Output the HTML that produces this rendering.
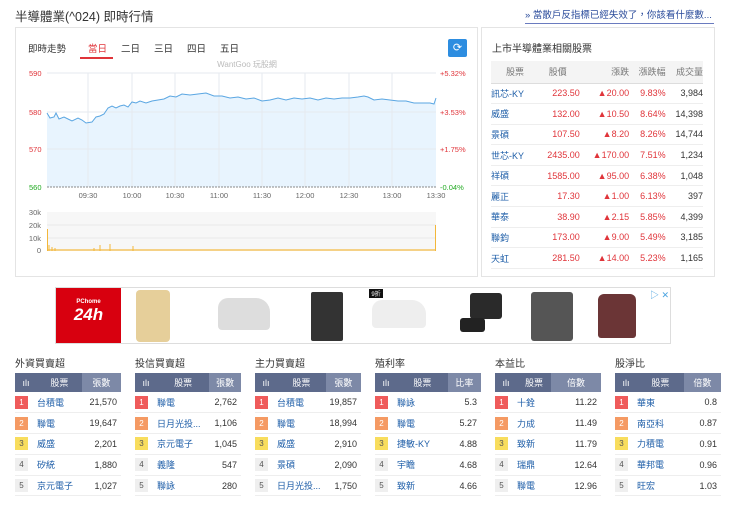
<!DOCTYPE html><html><head><meta charset="utf-8"><style>
*{margin:0;padding:0;box-sizing:border-box}
body{width:740px;height:506px;background:#fff;font-family:"Liberation Sans","Noto Sans CJK TC",sans-serif;color:#333;position:relative;overflow:hidden;font-size:9px}
.a{position:absolute}
.title{left:15px;top:6px;font-size:12.5px;color:#333}
.link{left:525px;top:7px;width:189px;font-size:9.5px;color:#2a4b9b;border-bottom:1px solid #6a7bbf;padding-bottom:2px;white-space:nowrap}
.panel{border:1px solid #e4e4e4;background:#fff}
.tabs span{position:absolute;top:0;font-size:9.5px;color:#333;white-space:nowrap}
.rt table{border-collapse:collapse;width:212px;font-size:9px}
.rt th{background:#f4f4f4;color:#777;font-weight:normal;height:22px;border-bottom:1px solid #ddd}
.rt td{height:20.6px;border-bottom:1px solid #eee;color:#e0343a;text-align:right;white-space:nowrap}
.rt td:first-child{text-align:left;color:#1e5ea8}
.rt td:last-child{color:#333}
.bt{width:106px}
.bt h4{font-weight:normal;font-size:10px;color:#333;height:18px}
.bt table{border-collapse:collapse;width:106px;font-size:9px}
.bt th{background:#5d6a8b;color:#fff;font-weight:normal;height:19px}
.bt th.l{background:#7d89a7}
.bt td{height:20.8px;border-bottom:1px solid #eee;white-space:nowrap}
.n{display:inline-block;width:13px;height:13px;line-height:13px;text-align:center;color:#fff;font-size:8px}
.r1{background:#ef5b5b}.r2{background:#f59a63}.r3{background:#f8dd5d;color:#555}.r4{background:#efefef;color:#555}
.bt td.s{color:#1e5ea8}
.bt td.v{text-align:right;color:#333;padding-right:4px}
</style></head><body>
<div class="a title">半導體業(^024) 即時行情</div>
<div class="a link">» 當散戶反指標已經失效了，你該看什麼數...</div>

<div class="a panel" style="left:15px;top:27px;width:463px;height:250px"></div>
<div class="a tabs" style="left:28px;top:41px">
<span style="left:0">即時走勢</span>
<span style="left:60px;color:#e0343a">當日</span>
<span style="left:93px">二日</span>
<span style="left:126px">三日</span>
<span style="left:159px">四日</span>
<span style="left:192px">五日</span>
</div>
<div class="a" style="left:80px;top:57px;width:33px;height:2px;background:#e0343a"></div>
<div class="a" style="left:448px;top:39px;width:19px;height:18px;background:#2d8de0;border-radius:2px;color:#fff;font-size:11px;text-align:center;line-height:18px">⟳</div>
<svg class="a" style="left:0;top:0" width="480" height="280">
<path d="M47 113 L50 118 L54 117 L56 113 L59 119 L64 117 L68 119 L72 121 L78 118 L82 120 L86 123 L92 122 L96 117 L100 116 L104 114 L108 108 L112 106 L116 108 L120 106 L124 105 L128 107 L132 102 L136 103 L140 101 L146 103 L152 101 L158 100 L164 99 L170 96 L176 97 L182 94 L190 95 L198 94 L206 93 L214 96 L222 96 L230 98 L238 97 L246 99 L254 98 L262 101 L270 100 L278 98 L286 100 L294 98 L302 99 L310 98 L318 100 L326 98 L334 99 L342 98 L350 98 L358 97 L364 96 L368 97 L374 100 L382 99 L390 100 L398 101 L406 101 L414 103 L422 103 L430 103 L434 104 L436 98 L436 187 L47 187Z" fill="#e8f4fe"/>
<g stroke="#e6eaef" stroke-width="1">
<line x1="47" y1="73" x2="436" y2="73"/><line x1="47" y1="112" x2="436" y2="112"/><line x1="47" y1="149" x2="436" y2="149"/>
<line x1="88" y1="73" x2="88" y2="187"/><line x1="132" y1="73" x2="132" y2="187"/><line x1="175" y1="73" x2="175" y2="187"/><line x1="219" y1="73" x2="219" y2="187"/><line x1="262" y1="73" x2="262" y2="187"/><line x1="305" y1="73" x2="305" y2="187"/><line x1="349" y1="73" x2="349" y2="187"/><line x1="392" y1="73" x2="392" y2="187"/>
</g>
<text x="247" y="67" font-size="8" fill="#bbb" text-anchor="middle" font-family="Liberation Sans">WantGoo 玩股網</text>
<polyline fill="none" stroke="#5aa6e2" stroke-width="1" points="47,113 50,118 54,117 56,113 59,119 64,117 68,119 72,121 78,118 82,120 86,123 92,122 96,117 100,116 104,114 108,108 112,106 116,108 120,106 124,105 128,107 132,102 136,103 140,101 146,103 152,101 158,100 164,99 170,96 176,97 182,94 190,95 198,94 206,93 214,96 222,96 230,98 238,97 246,99 254,98 262,101 270,100 278,98 286,100 294,98 302,99 310,98 318,100 326,98 334,99 342,98 350,98 358,97 364,96 368,97 374,100 382,99 390,100 398,101 406,101 414,103 422,103 430,103 434,104 436,98"/>
<line x1="47" y1="187" x2="436" y2="187" stroke="#888" stroke-dasharray="2,1"/>
<g font-size="7.5" font-family="Liberation Sans">
<text x="29" y="76" fill="#e0343a">590</text><text x="29" y="115" fill="#e0343a">580</text><text x="29" y="152" fill="#e0343a">570</text><text x="29" y="190" fill="#2a2">560</text>
<text x="440" y="76" fill="#e0343a">+5.32%</text><text x="440" y="115" fill="#e0343a">+3.53%</text><text x="440" y="152" fill="#e0343a">+1.75%</text><text x="440" y="190" fill="#2a2">-0.04%</text>
<g fill="#666" text-anchor="middle"><text x="88" y="198">09:30</text><text x="132" y="198">10:00</text><text x="175" y="198">10:30</text><text x="219" y="198">11:00</text><text x="262" y="198">11:30</text><text x="305" y="198">12:00</text><text x="349" y="198">12:30</text><text x="392" y="198">13:00</text><text x="436" y="198">13:30</text></g>
<g fill="#666" text-anchor="end"><text x="41" y="215">30k</text><text x="41" y="228">20k</text><text x="41" y="241">10k</text><text x="41" y="253">0</text></g>
</g>
<rect x="47" y="212" width="389" height="39" fill="#f7f7f7"/>
<g stroke="#e8e8e8"><line x1="47" y1="225" x2="436" y2="225"/><line x1="47" y1="238" x2="436" y2="238"/></g>
<g stroke="#f3b73a" stroke-width="1">
<line x1="47.5" y1="251" x2="47.5" y2="229"/><line x1="49" y1="251" x2="49" y2="245"/><line x1="52" y1="251" x2="52" y2="247"/><line x1="55" y1="251" x2="55" y2="248"/>
<line x1="100" y1="251" x2="100" y2="245"/><line x1="110" y1="251" x2="110" y2="244"/><line x1="133" y1="251" x2="133" y2="246"/><line x1="94" y1="251" x2="94" y2="248"/>
<line x1="435.5" y1="251" x2="435.5" y2="225"/>
</g>
<rect x="47" y="249" width="389" height="2" fill="#f3b73a" opacity=".6"/>
</svg>

<div class="a panel" style="left:481px;top:27px;width:234px;height:250px"></div>
<div class="a" style="left:492px;top:40px;font-size:10px">上市半導體業相關股票</div>
<div class="a rt" style="left:491px;top:61px">
<table><tr><th style="text-align:left;padding-left:15px">股票</th><th>股價</th><th style="text-align:right">漲跌</th><th style="text-align:right">漲跌幅</th><th style="text-align:right">成交量</th></tr>
<tr><td>訊芯-KY</td><td>223.50</td><td>▲20.00</td><td>9.83%</td><td>3,984</td></tr>
<tr><td>威盛</td><td>132.00</td><td>▲10.50</td><td>8.64%</td><td>14,398</td></tr>
<tr><td>景碩</td><td>107.50</td><td>▲8.20</td><td>8.26%</td><td>14,744</td></tr>
<tr><td>世芯-KY</td><td>2435.00</td><td>▲170.00</td><td>7.51%</td><td>1,234</td></tr>
<tr><td>祥碩</td><td>1585.00</td><td>▲95.00</td><td>6.38%</td><td>1,048</td></tr>
<tr><td>麗正</td><td>17.30</td><td>▲1.00</td><td>6.13%</td><td>397</td></tr>
<tr><td>華泰</td><td>38.90</td><td>▲2.15</td><td>5.85%</td><td>4,399</td></tr>
<tr><td>聯鈞</td><td>173.00</td><td>▲9.00</td><td>5.49%</td><td>3,185</td></tr>
<tr><td>天虹</td><td>281.50</td><td>▲14.00</td><td>5.23%</td><td>1,165</td></tr>
</table></div>

<div class="a" style="left:55px;top:287px;width:616px;height:57px;border:1px solid #ddd;background:#fff"></div>
<div class="a" style="left:56px;top:288px;width:65px;height:55px;background:#d8000f;color:#fff;text-align:center"><div style="font-size:6px;margin-top:11px;font-weight:bold">PChome</div><div style="font-size:17px;font-weight:bold;font-style:italic">24h</div></div>
<div class="a" style="left:136px;top:290px;width:34px;height:52px;background:#e6cf9a;border-radius:4px"></div>
<div class="a" style="left:218px;top:298px;width:52px;height:32px;background:#ddd;border-radius:10px 14px 4px 4px"></div>
<div class="a" style="left:311px;top:292px;width:32px;height:49px;background:#333;border-radius:2px"></div>
<div class="a" style="left:369px;top:289px;width:14px;height:9px;background:#111;color:#fff;font-size:6px;text-align:center">9折</div>
<div class="a" style="left:372px;top:300px;width:54px;height:28px;background:#eee;border-radius:10px 14px 4px 4px"></div>
<div class="a" style="left:470px;top:293px;width:32px;height:26px;background:#2a2a2a;border-radius:3px"></div>
<div class="a" style="left:460px;top:318px;width:25px;height:14px;background:#222;border-radius:3px"></div>
<div class="a" style="left:531px;top:292px;width:42px;height:49px;background:#555;border-radius:3px"></div>
<div class="a" style="left:598px;top:294px;width:38px;height:44px;background:#6b3536;border-radius:6px 6px 3px 3px"></div>
<div class="a" style="left:650px;top:288px;font-size:9px;color:#4aa3e0">▷ ✕</div>

<div class="a bt" style="left:15px;top:355px"><h4>外資買賣超</h4><table><tr><th style="width:22px">ılı</th><th>股票</th><th class="l">張數</th></tr>
<tr><td><span class="n r1">1</span></td><td class="s">台積電</td><td class="v">21,570</td></tr>
<tr><td><span class="n r2">2</span></td><td class="s">聯電</td><td class="v">19,647</td></tr>
<tr><td><span class="n r3">3</span></td><td class="s">威盛</td><td class="v">2,201</td></tr>
<tr><td><span class="n r4">4</span></td><td class="s">矽統</td><td class="v">1,880</td></tr>
<tr><td><span class="n r4">5</span></td><td class="s">京元電子</td><td class="v">1,027</td></tr></table></div>
<div class="a bt" style="left:135px;top:355px"><h4>投信買賣超</h4><table><tr><th style="width:22px">ılı</th><th>股票</th><th class="l">張數</th></tr>
<tr><td><span class="n r1">1</span></td><td class="s">聯電</td><td class="v">2,762</td></tr>
<tr><td><span class="n r2">2</span></td><td class="s">日月光投...</td><td class="v">1,106</td></tr>
<tr><td><span class="n r3">3</span></td><td class="s">京元電子</td><td class="v">1,045</td></tr>
<tr><td><span class="n r4">4</span></td><td class="s">義隆</td><td class="v">547</td></tr>
<tr><td><span class="n r4">5</span></td><td class="s">聯詠</td><td class="v">280</td></tr></table></div>
<div class="a bt" style="left:255px;top:355px"><h4>主力買賣超</h4><table><tr><th style="width:22px">ılı</th><th>股票</th><th class="l">張數</th></tr>
<tr><td><span class="n r1">1</span></td><td class="s">台積電</td><td class="v">19,857</td></tr>
<tr><td><span class="n r2">2</span></td><td class="s">聯電</td><td class="v">18,994</td></tr>
<tr><td><span class="n r3">3</span></td><td class="s">威盛</td><td class="v">2,910</td></tr>
<tr><td><span class="n r4">4</span></td><td class="s">景碩</td><td class="v">2,090</td></tr>
<tr><td><span class="n r4">5</span></td><td class="s">日月光投...</td><td class="v">1,750</td></tr></table></div>
<div class="a bt" style="left:375px;top:355px"><h4>殖利率</h4><table><tr><th style="width:22px">ılı</th><th>股票</th><th class="l">比率</th></tr>
<tr><td><span class="n r1">1</span></td><td class="s">聯詠</td><td class="v">5.3</td></tr>
<tr><td><span class="n r2">2</span></td><td class="s">聯電</td><td class="v">5.27</td></tr>
<tr><td><span class="n r3">3</span></td><td class="s">捷敏-KY</td><td class="v">4.88</td></tr>
<tr><td><span class="n r4">4</span></td><td class="s">宇瞻</td><td class="v">4.68</td></tr>
<tr><td><span class="n r4">5</span></td><td class="s">致新</td><td class="v">4.66</td></tr></table></div>
<div class="a bt" style="left:495px;top:355px"><h4>本益比</h4><table><tr><th style="width:22px">ılı</th><th>股票</th><th class="l">倍數</th></tr>
<tr><td><span class="n r1">1</span></td><td class="s">十銓</td><td class="v">11.22</td></tr>
<tr><td><span class="n r2">2</span></td><td class="s">力成</td><td class="v">11.49</td></tr>
<tr><td><span class="n r3">3</span></td><td class="s">致新</td><td class="v">11.79</td></tr>
<tr><td><span class="n r4">4</span></td><td class="s">瑞鼎</td><td class="v">12.64</td></tr>
<tr><td><span class="n r4">5</span></td><td class="s">聯電</td><td class="v">12.96</td></tr></table></div>
<div class="a bt" style="left:615px;top:355px"><h4>股淨比</h4><table><tr><th style="width:22px">ılı</th><th>股票</th><th class="l">倍數</th></tr>
<tr><td><span class="n r1">1</span></td><td class="s">華東</td><td class="v">0.8</td></tr>
<tr><td><span class="n r2">2</span></td><td class="s">南亞科</td><td class="v">0.87</td></tr>
<tr><td><span class="n r3">3</span></td><td class="s">力積電</td><td class="v">0.91</td></tr>
<tr><td><span class="n r4">4</span></td><td class="s">華邦電</td><td class="v">0.96</td></tr>
<tr><td><span class="n r4">5</span></td><td class="s">旺宏</td><td class="v">1.03</td></tr></table></div>
</body></html>
